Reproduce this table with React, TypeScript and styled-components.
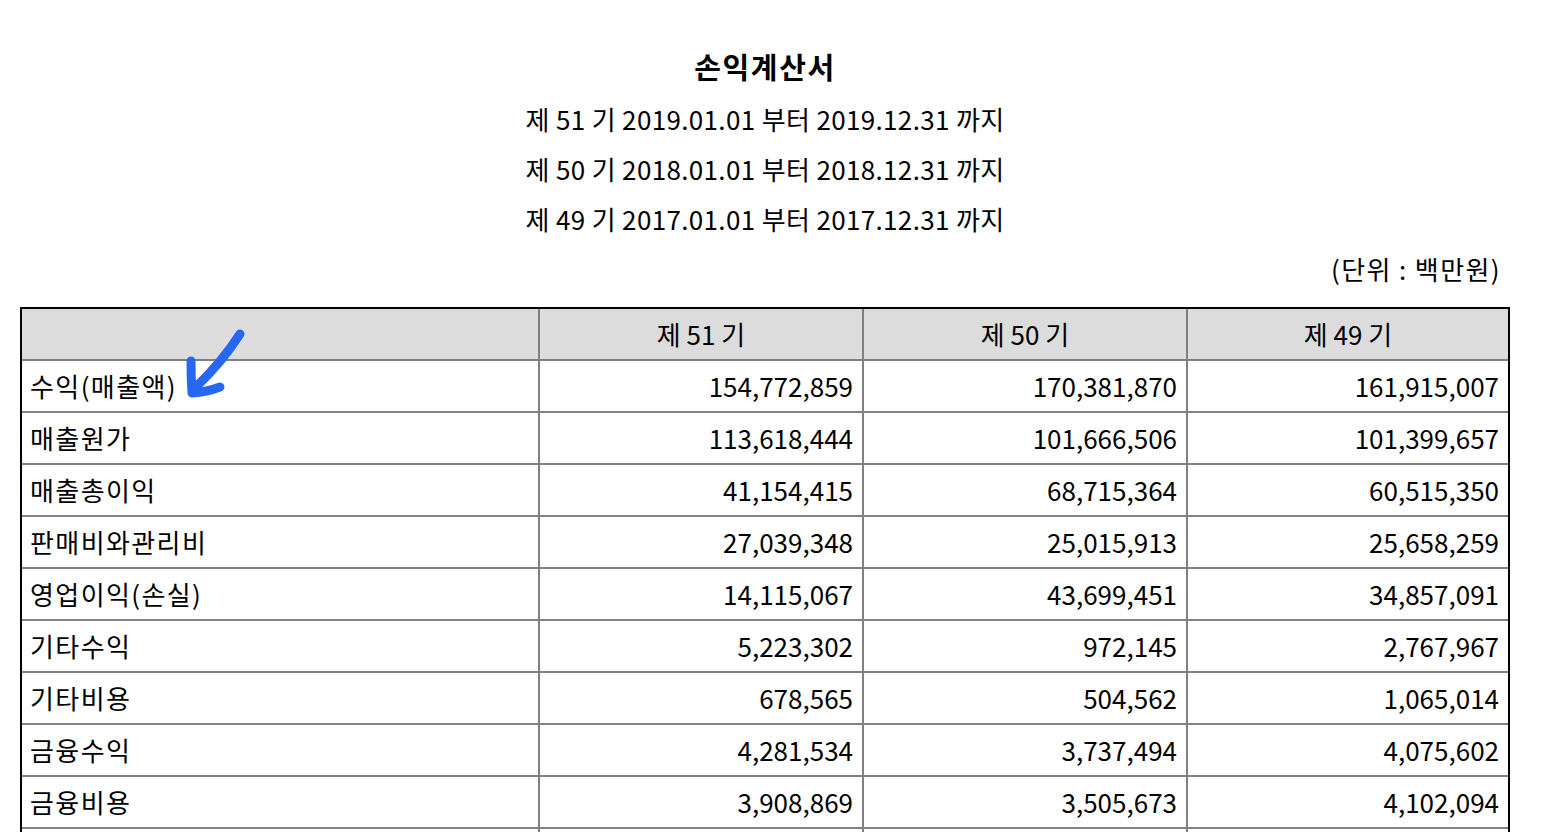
import React from "react";
import styled, { createGlobalStyle } from "styled-components";

const GlobalStyle = createGlobalStyle`
  html, body {
    margin: 0;
    padding: 0;
    background: #ffffff;
  }
  body {
    font-family: "Noto Sans CJK KR", "Noto Sans", sans-serif;
    color: #000000;
  }
  * { box-sizing: border-box; }
`;

const Page = styled.div`
  padding: 41px 34px 40px 20px;
  width: 1544px;
`;

const Header = styled.header`
  display: flex;
  flex-direction: column;
  align-items: center;
`;

const Title = styled.h1`
  margin: 0 0 3px;
  font-size: 29px;
  font-weight: 700;
  line-height: 50px;
  letter-spacing: 1.6px;
`;

const Period = styled.div`
  font-size: 26px;
  line-height: 50px;
  white-space: nowrap;
  letter-spacing: 0.35px;
`;

const Unit = styled.div`
  align-self: flex-end;
  padding-right: 9px;
  font-size: 26px;
  line-height: 50px;
  letter-spacing: 1.4px;
`;

const TableWrap = styled.div`
  position: relative;
  margin-top: 13px;
`;

const Table = styled.table`
  width: 1490px;
  table-layout: fixed;
  border-collapse: separate;
  border-spacing: 0;
  border: 2px solid #000000;
  font-size: 26px;
`;

const HeadCell = styled.th`
  height: 52px;
  padding: 0 8px 2px;
  background: #dcdcdc;
  font-weight: 400;
  text-align: center;
  border-right: 2px solid #808080;
  border-bottom: 2px solid #808080;
  &:last-child { border-right: none; }
`;

const Cell = styled.td<{ $num?: boolean }>`
  height: 52px;
  padding: ${(p) => (p.$num ? "0 9px 2px 8px" : "0 8px 2px")};
  text-align: ${(p) => (p.$num ? "right" : "left")};
  letter-spacing: ${(p) => (p.$num ? "0" : "1.4px")};
  white-space: nowrap;
  border-right: 2px solid #808080;
  border-bottom: 2px solid #808080;
  &:last-child { border-right: none; }
`;

const Row = styled.tr`
  &:last-child td { border-bottom: none; }
`;

const Arrow = styled.svg`
  position: absolute;
  left: 0;
  top: 0;
  pointer-events: none;
  overflow: visible;
`;

const rows: [string, string, string, string][] = [
  ["수익(매출액)", "154,772,859", "170,381,870", "161,915,007"],
  ["매출원가", "113,618,444", "101,666,506", "101,399,657"],
  ["매출총이익", "41,154,415", "68,715,364", "60,515,350"],
  ["판매비와관리비", "27,039,348", "25,015,913", "25,658,259"],
  ["영업이익(손실)", "14,115,067", "43,699,451", "34,857,091"],
  ["기타수익", "5,223,302", "972,145", "2,767,967"],
  ["기타비용", "678,565", "504,562", "1,065,014"],
  ["금융수익", "4,281,534", "3,737,494", "4,075,602"],
  ["금융비용", "3,908,869", "3,505,673", "4,102,094"],
  ["법인세비용차감전순이익(손실)", "15,972,539", "45,003,409", "37,613,480"],
  ["법인세비용", "469,949", "12,850,197", "9,583,173"],
  ["당기순이익(손실)", "15,502,590", "32,153,212", "28,030,307"],
];

export default function App() {
  return (
    <Page>
      <GlobalStyle />
      <Header>
        <Title>손익계산서</Title>
        <Period>제 51 기 2019.01.01 부터 2019.12.31 까지</Period>
        <Period>제 50 기 2018.01.01 부터 2018.12.31 까지</Period>
        <Period>제 49 기 2017.01.01 부터 2017.12.31 까지</Period>
        <Unit>(단위 : 백만원)</Unit>
      </Header>
      <TableWrap>
        <Table>
          <colgroup>
            <col style={{ width: 518 }} />
            <col style={{ width: 324 }} />
            <col style={{ width: 324 }} />
            <col style={{ width: 320 }} />
          </colgroup>
          <thead>
            <tr>
              <HeadCell />
              <HeadCell>제 51 기</HeadCell>
              <HeadCell>제 50 기</HeadCell>
              <HeadCell>제 49 기</HeadCell>
            </tr>
          </thead>
          <tbody>
            {rows.map((r) => (
              <Row key={r[0]}>
                <Cell>{r[0]}</Cell>
                <Cell $num>{r[1]}</Cell>
                <Cell $num>{r[2]}</Cell>
                <Cell $num>{r[3]}</Cell>
              </Row>
            ))}
          </tbody>
        </Table>
        <Arrow width="1" height="1">
          <g
            fill="none"
            stroke="#2767f2"
            strokeWidth="9"
            strokeLinecap="round"
            strokeLinejoin="round"
            transform="translate(-20,-307)"
          >
            <path d="M240 334 Q222 362 196 387" />
            <path d="M191 361 Q191 378 192 393 Q207 392 220 387" />
          </g>
        </Arrow>
      </TableWrap>
    </Page>
  );
}
